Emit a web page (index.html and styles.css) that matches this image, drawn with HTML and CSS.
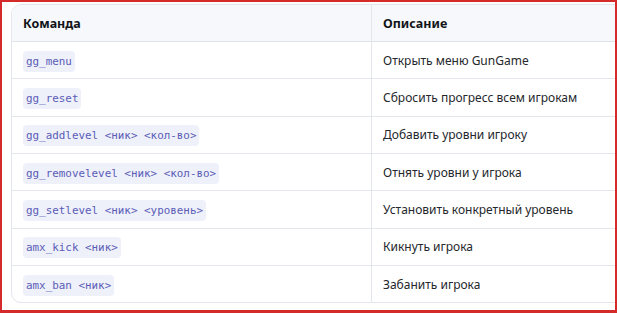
FILE: index.html
```html
<!DOCTYPE html>
<html lang="ru">
<head>
<meta charset="utf-8">
<link rel="stylesheet" href="styles.css">
</head>
<body>
<div class="frame">
  <div class="card">
    <table class="cmds">
      <thead>
        <tr><th class="c1">Команда</th><th class="c2">Описание</th></tr>
      </thead>
      <tbody>
        <tr><td><code>gg_menu</code></td><td>Открыть меню GunGame</td></tr>
        <tr><td><code>gg_reset</code></td><td>Сбросить прогресс всем игрокам</td></tr>
        <tr><td><code>gg_addlevel &lt;ник&gt; &lt;кол-во&gt;</code></td><td>Добавить уровни игроку</td></tr>
        <tr><td><code>gg_removelevel &lt;ник&gt; &lt;кол-во&gt;</code></td><td>Отнять уровни у игрока</td></tr>
        <tr><td><code>gg_setlevel &lt;ник&gt; &lt;уровень&gt;</code></td><td>Установить конкретный уровень</td></tr>
        <tr><td><code>amx_kick &lt;ник&gt;</code></td><td>Кикнуть игрока</td></tr>
        <tr><td><code>amx_ban &lt;ник&gt;</code></td><td>Забанить игрока</td></tr>
      </tbody>
    </table>
  </div>
</div>
</body>
</html>
```
FILE: styles.css
```css
html, body {
  margin: 0;
  padding: 0;
  background: #ffffff;
}
.frame {
  box-sizing: border-box;
  width: 617px;
  height: 313px;
  border: 2px solid #d42a2a;
  border-bottom-width: 3px;
  overflow: hidden;
  padding: 2px 0 0 9px;
  background: #ffffff;
}
.card {
  width: 720px;
  border: 1px solid #e3e6eb;
  border-radius: 10px;
  overflow: hidden;
}
.cmds {
  border-collapse: collapse;
  width: 100%;
  font-family: "Noto Sans", "Open Sans", sans-serif;
  font-size: 12px;
  color: #24272b;
}
.cmds th {
  text-align: left;
  font-weight: 700;
  font-size: 12.5px;
  color: #111418;
  background: #f6f8fb;
  height: 36px;
  padding: 0 11px;
  border-bottom: 1px solid #dfe2e7;
}
.cmds th.c1, .cmds td:first-child {
  width: 337px;
  border-right: 1px solid #e3e6eb;
}
.cmds td {
  height: 36.35px;
  padding: 0 11px;
  border-bottom: 1px solid #e3e6eb;
}
.cmds tbody tr:last-child td {
  border-bottom: none;
}
code {
  font-family: "DejaVu Sans Mono", "Liberation Mono", monospace;
  font-size: 10.9px;
  color: #5a5cb6;
  background: #eef0fa;
  padding: 4px 3px;
  border-radius: 4px;
}
```
